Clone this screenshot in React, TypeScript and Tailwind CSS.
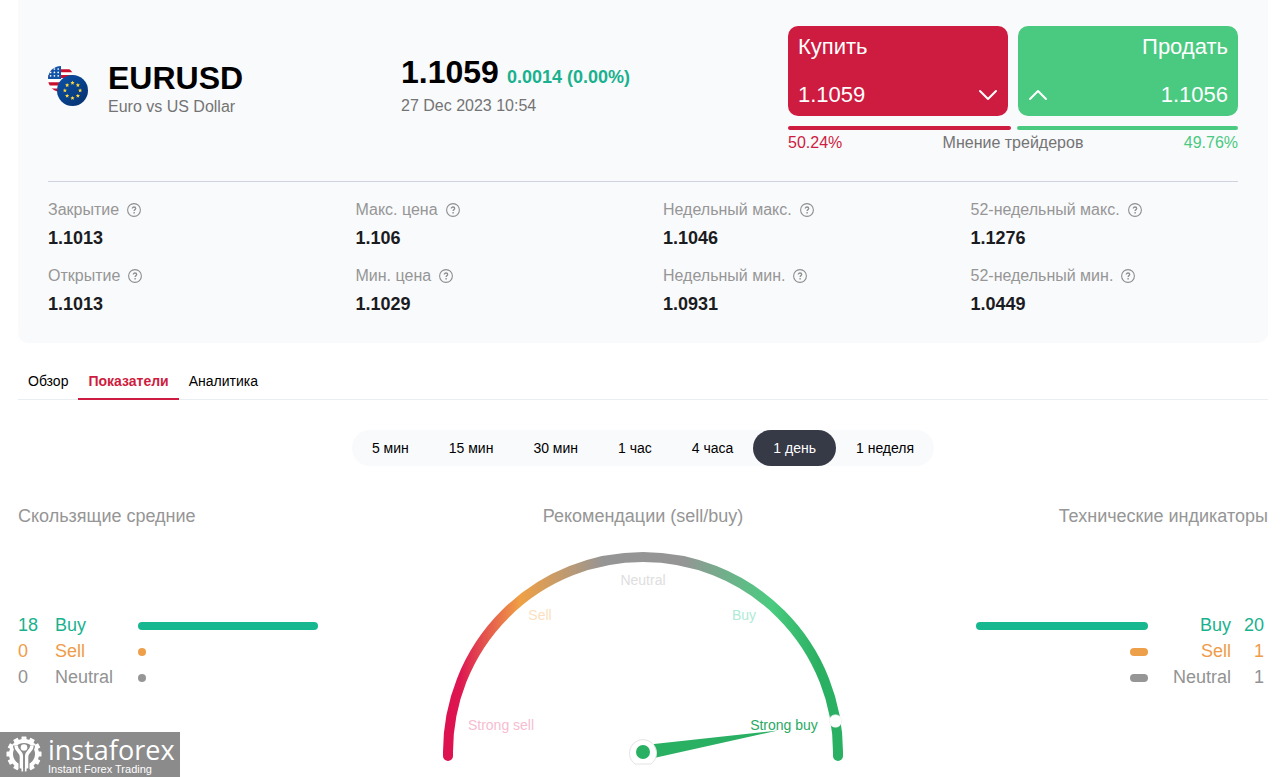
import React, { useState } from 'react';

const stats = [
  { label: 'Закрытие', value: '1.1013' },
  { label: 'Макс. цена', value: '1.106' },
  { label: 'Недельный макс.', value: '1.1046' },
  { label: '52-недельный макс.', value: '1.1276' },
  { label: 'Открытие', value: '1.1013' },
  { label: 'Мин. цена', value: '1.1029' },
  { label: 'Недельный мин.', value: '1.0931' },
  { label: '52-недельный мин.', value: '1.0449' },
];

const tabs = ['Обзор', 'Показатели', 'Аналитика'];
const periods = ['5 мин', '15 мин', '30 мин', '1 час', '4 часа', '1 день', '1 неделя'];

type Signal = { name: string; count: number; bar: number; text: string; fill: string };

const averages: Signal[] = [
  { name: 'Buy', count: 18, bar: 180, text: 'text-[#19b18e]', fill: 'bg-[#17b890]' },
  { name: 'Sell', count: 0, bar: 8, text: 'text-[#ef9c4a]', fill: 'bg-[#eda049]' },
  { name: 'Neutral', count: 0, bar: 8, text: 'text-[#939393]', fill: 'bg-[#969696]' },
];

const indicators: Signal[] = [
  { name: 'Buy', count: 20, bar: 172, text: 'text-[#19b18e]', fill: 'bg-[#17b890]' },
  { name: 'Sell', count: 1, bar: 18, text: 'text-[#ef9c4a]', fill: 'bg-[#eda049]' },
  { name: 'Neutral', count: 1, bar: 18, text: 'text-[#939393]', fill: 'bg-[#969696]' },
];

function PairFlags() {
  const stars = Array.from({ length: 8 }, (_, i) => {
    const a = (i * Math.PI) / 4;
    const cx = 24.5 + 7.6 * Math.sin(a);
    const cy = 24.5 - 7.6 * Math.cos(a);
    return Array.from({ length: 10 }, (_, k) => {
      const r = k % 2 === 0 ? 2.2 : 1;
      const t = (k * Math.PI) / 5;
      return `${(cx + r * Math.sin(t)).toFixed(2)},${(cy - r * Math.cos(t)).toFixed(2)}`;
    }).join(' ');
  });
  return (
    <svg viewBox="0 0 40 40" className="mt-1.5 size-10 shrink-0" aria-hidden="true">
      <defs>
        <clipPath id="us">
          <circle cx="13" cy="13" r="13" />
        </clipPath>
        <linearGradient id="eu" x1="0" y1="0" x2="1" y2="1">
          <stop offset="0" stopColor="#0a52a8" />
          <stop offset="1" stopColor="#06306c" />
        </linearGradient>
      </defs>
      <g clipPath="url(#us)">
        <rect width="26" height="26" fill="#fff" />
        <path d="M0 3.2h26v3H0zM0 9h26v3H0zM0 16.2h26v3.2H0zM0 22.6h26V26H0z" fill="#c8102e" />
        <path d="M0 0h13v13H0z" fill="#1255a8" />
        <g fill="#fff">
          {[2.2, 5.6, 9].map((y) =>
            [2.6, 6.4, 10.2].map((x) => <circle key={`${x}-${y}`} cx={x} cy={y + 0.8} r="0.85" />),
          )}
        </g>
      </g>
      <circle cx="24.5" cy="24.5" r="15.5" fill="url(#eu)" />
      {stars.map((points) => (
        <polygon key={points} points={points} fill="#ffd93b" />
      ))}
    </svg>
  );
}

function HelpIcon() {
  return (
    <svg viewBox="0 0 14 14" className="size-3.5" fill="none" stroke="#8f8f8f" aria-hidden="true">
      <circle cx="7" cy="7" r="6.4" strokeWidth="1.1" />
      <path d="M5.3 5.6C5.3 4.5 6 4 7 4s1.700.6 1.700 1.500C8.700 6.700 7.100 6.600 7.100 8.100" strokeWidth="1.3" />
      <path d="M7.100 9v1.400" strokeWidth="1.400" />
    </svg>
  );
}

function Chevron({ d }: { d: string }) {
  return (
    <svg
      viewBox="0 0 20 12"
      className="h-3 w-5"
      fill="none"
      stroke="#fff"
      strokeWidth="2"
      strokeLinecap="round"
      strokeLinejoin="round"
      aria-hidden="true"
    >
      <path d={d} />
    </svg>
  );
}

function SignalList({ items, mirrored = false }: { items: Signal[]; mirrored?: boolean }) {
  return (
    <ul className="mt-[84px] text-[18px] leading-[26px]">
      {items.map((s) => (
        <li key={s.name} className={`flex items-center ${s.text} ${mirrored ? 'flex-row-reverse text-right' : ''}`}>
          <span className={`w-[37px] ${mirrored ? 'pr-1' : ''}`}>{s.count}</span>
          <span className="w-[83px]">{s.name}</span>
          <span className={`mt-0.5 h-2 rounded-full ${s.fill}`} style={{ width: s.bar }} />
        </li>
      ))}
    </ul>
  );
}

function Gauge() {
  return (
    <svg viewBox="0 0 406 225" className="mt-6 h-[225px] w-[406px]" fontSize="14" textAnchor="middle">
      <defs>
        <linearGradient id="arc" gradientUnits="userSpaceOnUse" x1="8" y1="0" x2="398" y2="0">
          <stop offset="0" stopColor="#dd1250" />
          <stop offset="0.03" stopColor="#dd1651" />
          <stop offset="0.08" stopColor="#e2474f" />
          <stop offset="0.185" stopColor="#efa045" />
          <stop offset="0.4" stopColor="#959595" />
          <stop offset="0.6" stopColor="#959595" />
          <stop offset="0.83" stopColor="#4acb80" />
          <stop offset="0.95" stopColor="#2bb062" />
          <stop offset="1" stopColor="#29b063" />
        </linearGradient>
      </defs>
      <path
        d="M8 204v-4a195 195 0 0 1 390 0v4"
        fill="none"
        stroke="url(#arc)"
        strokeWidth="10"
        strokeLinecap="round"
      />
      <text x="203" y="33" fill="#dedede">Neutral</text>
      <text x="100" y="68" fill="#fbdfc0">Sell</text>
      <text x="304" y="68" fill="#aeebd6">Buy</text>
      <text x="61" y="178" fill="#f6bdd0">Strong sell</text>
      <path d="M214 192 338 178.500 214 206z" fill="#29b063" />
      <path d="M195 212a13.500 13.500 0 1 1 16 0z" fill="#fff" stroke="#e4e4e4" />
      <circle cx="203" cy="200" r="7" fill="#29b063" />
      <circle cx="395.500" cy="169" r="6.300" fill="#fff" stroke="#e6eee9" strokeWidth="0.600" />
      <text x="344" y="178" fill="#29a964">Strong buy</text>
    </svg>
  );
}

function BrandMark() {
  const teeth = Array.from({ length: 12 }, (_, i) => i * 30);
  const body = 'M10 9.500c0 6 5.500 5.500 5.500 11v11.500M26 9.500c0 6-5.500 5.500-5.500 11v11.500';
  return (
    <svg viewBox="0 0 36 36" className="mb-1 size-9 shrink-0" fill="none" aria-hidden="true">
      <g fill="#fff">
        {teeth.map((a) => (
          <rect key={a} x="15.500" y="0.500" width="5" height="6" rx="0.600" transform={`rotate(${a} 18 18)`} />
        ))}
      </g>
      <circle cx="18" cy="18" r="13" stroke="#fff" strokeWidth="4" />
      <path d={body} stroke="#8b8b8b" strokeWidth="6" />
      <path d={body} stroke="#fff" strokeWidth="3.600" />
      <circle cx="18" cy="11.500" r="3.300" fill="#fff" />
      <path d="M18 18v18" stroke="#8b8b8b" strokeWidth="1.800" />
    </svg>
  );
}

export default function App() {
  const [tab, setTab] = useState('Показатели');
  const [period, setPeriod] = useState('1 день');

  return (
    <div className="relative bg-white px-[18px] pr-[17px] font-['Liberation_Sans',Arial,sans-serif] text-black">
      <section className="rounded-b-[10px] bg-[#f9fafc] px-[30px] pt-[26px] pb-[25px]">
        <div className="flex h-[156px] items-start border-b border-[#cfd3df]">
          <div className="flex w-[353px] items-start gap-5 pt-[34px]">
            <PairFlags />
            <div>
              <h1 className="text-[32px] leading-9 font-bold">EURUSD</h1>
              <p className="text-base leading-[22px] text-[#747474]">Euro vs US Dollar</p>
            </div>
          </div>
          <div className="flex-1 pt-7">
            <p className="flex items-baseline gap-2 leading-9 font-bold">
              <span className="text-[32px]">1.1059</span>
              <span className="text-[18px] text-[#19b18e]">0.0014 (0.00%)</span>
            </p>
            <p className="text-base leading-[22px] text-[#747474]">27 Dec 2023 10:54</p>
          </div>
          <div className="w-[450px]">
            <div className="grid grid-cols-2 gap-2.5 text-[22px] leading-[26px] text-white">
              <button className="flex h-[90px] cursor-pointer flex-col justify-between rounded-[10px] bg-[#ce1c40] px-2.5 py-2 text-left">
                <span>Купить</span>
                <span className="flex w-full items-center justify-between">
                  1.1059
                  <Chevron d="M2 2l8 8 8-8" />
                </span>
              </button>
              <button className="flex h-[90px] cursor-pointer flex-col items-end justify-between rounded-[10px] bg-[#4ac980] px-2.5 py-2 text-right">
                <span>Продать</span>
                <span className="flex w-full items-center justify-between">
                  <Chevron d="M2 10l8-8 8 8" />
                  1.1056
                </span>
              </button>
            </div>
            <div className="mt-2.5 flex gap-1.5">
              <span className="h-1 rounded-full bg-[#ce1c40]" style={{ flexGrow: 50.24 }} />
              <span className="h-1 rounded-full bg-[#4ac980]" style={{ flexGrow: 49.76 }} />
            </div>
            <div className="flex justify-between text-base leading-[26px] text-[#747474]">
              <span className="text-[#ce1c40]">50.24%</span>
              <span>Мнение трейдеров</span>
              <span className="text-[#4ac980]">49.76%</span>
            </div>
          </div>
        </div>
        <dl className="mt-4 grid grid-cols-4 gap-x-10 gap-y-3">
          {stats.map((s) => (
            <div key={s.label}>
              <dt className="flex items-center gap-2 text-base leading-6 text-[#969696]">
                {s.label}
                <HelpIcon />
              </dt>
              <dd className="mt-0.5 text-[18px] leading-7 font-bold text-[#1b1c21]">{s.value}</dd>
            </div>
          ))}
        </dl>
      </section>

      <nav className="mt-[21px] flex border-b border-[#e8eef1] text-sm">
        {tabs.map((t) => (
          <button
            key={t}
            onClick={() => setTab(t)}
            className={`-mb-px h-9 cursor-pointer border-b-2 px-2.5 ${
              t === tab ? 'border-[#ce1c40] font-bold text-[#ce1c40]' : 'border-transparent'
            }`}
          >
            {t}
          </button>
        ))}
      </nav>

      <div className="mt-[30px] flex justify-center">
        <div className="flex rounded-full bg-[#f9fafc]">
          {periods.map((p) => (
            <button
              key={p}
              onClick={() => setPeriod(p)}
              className={`h-9 cursor-pointer rounded-full px-5 text-sm ${p === period ? 'bg-[#363946] text-white' : ''}`}
            >
              {p}
            </button>
          ))}
        </div>
      </div>

      <div className="mt-[38px] grid grid-cols-[1fr_auto_1fr] text-[18px] leading-6">
        <section>
          <h2 className="text-[#969696]">Скользящие средние</h2>
          <SignalList items={averages} />
        </section>
        <section className="flex flex-col items-center">
          <h2 className="text-[#969696]">Рекомендации (sell/buy)</h2>
          <Gauge />
        </section>
        <section className="text-right">
          <h2 className="text-[#969696]">Технические индикаторы</h2>
          <SignalList items={indicators} mirrored />
        </section>
      </div>

      <div className="absolute bottom-0 left-0 flex h-[45px] w-[180px] items-center gap-1.5 bg-[#8b8b8b] pt-0.5 pl-1.5 text-white">
        <BrandMark />
        <div>
          <p className="font-['Open_Sans',sans-serif] text-[27px] leading-[26px] font-medium">instaforex</p>
          <p className="text-[11px] leading-3">Instant Forex Trading</p>
        </div>
      </div>
    </div>
  );
}
